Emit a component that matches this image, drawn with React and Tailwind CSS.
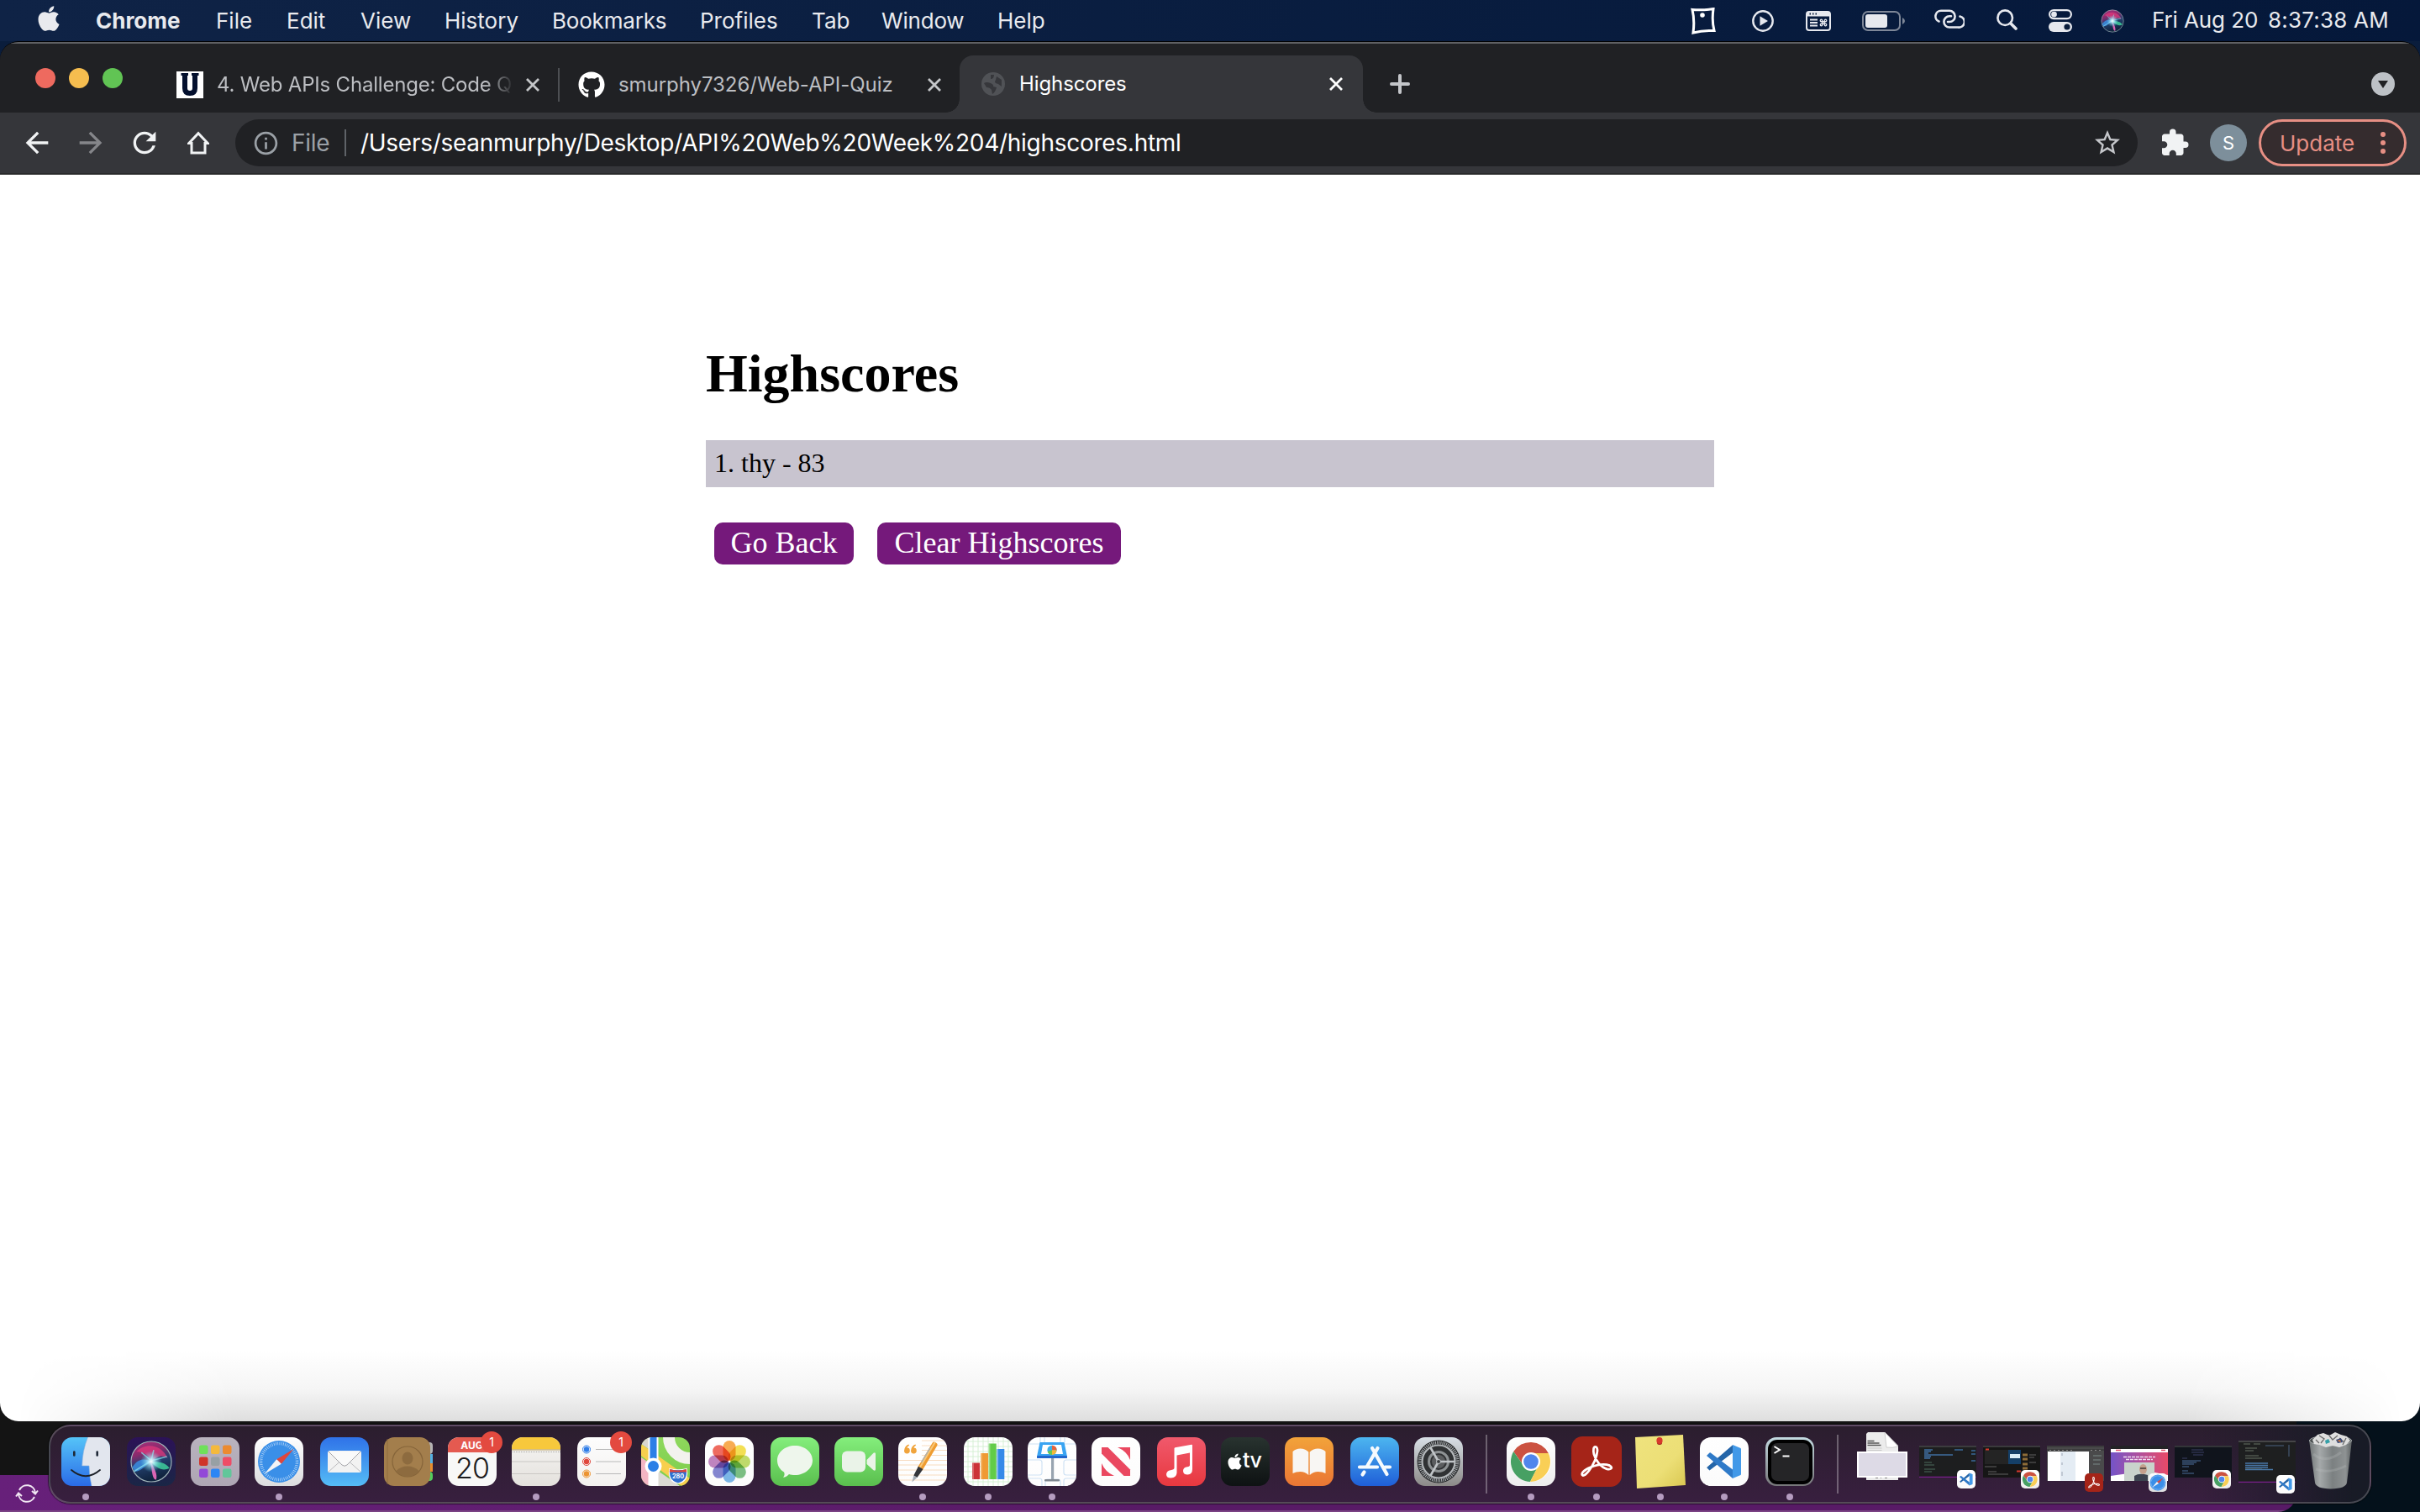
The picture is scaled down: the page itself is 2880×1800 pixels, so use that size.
import React from "react";
import { FaApple, FaGithub } from "react-icons/fa";
import { MdArrowBack, MdArrowForward, MdRefresh, MdInfoOutline, MdStarBorder, MdExtension } from "react-icons/md";
import { Command } from "lucide-react";

/* ---------- Menu bar ---------- */

const MENUS = [
  ["Chrome", "w-[143px] font-bold"],
  ["File", "w-[84px]"],
  ["Edit", "w-[88px]"],
  ["View", "w-[100px]"],
  ["History", "w-[128px]"],
  ["Bookmarks", "w-[176px] tracking-[-0.2px]"],
  ["Profiles", "w-[133px]"],
  ["Tab", "w-[83px]"],
  ["Window", "w-[138px] tracking-[-0.2px]"],
  ["Help", "w-[60px]"],
];

function SiriOrb({ size, className }) {
  return (
    <svg width={size} height={size} viewBox="0 0 52 52" className={className}>
      <defs>
        <linearGradient id="orb" x1="0" y1="0" x2="0.3" y2="1">
          <stop offset="0" stopColor="#a8327e" />
          <stop offset="0.35" stopColor="#8a2a6c" />
          <stop offset="0.6" stopColor="#24406f" />
          <stop offset="1" stopColor="#10243f" />
        </linearGradient>
        <radialGradient id="orbGlow">
          <stop offset="0" stopColor="#fff" />
          <stop offset="0.3" stopColor="#bff4ff" stopOpacity="0.8" />
          <stop offset="1" stopColor="#5fd0e8" stopOpacity="0" />
        </radialGradient>
      </defs>
      <circle cx="26" cy="26" r="24.5" fill="url(#orb)" stroke="#9fb3b8" strokeWidth="1.2" />
      <path d="M8 14 C18 3 38 4 46 22 C38 17 32 20 27 26 C22 16 14 14 8 14Z" fill="#e0387c" opacity="0.75" />
      <path d="M3 33 C10 22 18 22 26 26 C20 30 14 38 6 38Z" fill="#3c8de0" opacity="0.85" />
      <path d="M26 26 C34 26 44 27 48 34 C40 38 32 34 26 26Z" fill="#3ecf9c" opacity="0.85" />
      <path d="M25 26 C30 34 34 42 32 48 C27 48 27 36 25 26Z" fill="#f06cc0" opacity="0.9" />
      <path d="M5 38 L26 25 L14 15 M26 25 L29 12 M26 25 L45 20" stroke="#8fe8f0" strokeWidth="1.6" fill="none" opacity="0.7" />
      <circle cx="26" cy="26" r="13" fill="url(#orbGlow)" />
    </svg>
  );
}

function MenuBar() {
  return (
    <div className="flex h-[49px] items-center bg-linear-to-r from-[#0f2346] to-[#05183a] pl-[43px] font-[Inter,sans-serif] text-[26px] leading-[49px] text-[#e9eaee]">
      <FaApple className="mr-[39px] -mt-[5px] -ml-[2px] h-[34px] w-[34px] shrink-0" />
      {MENUS.map(([label, cls]) => (
        <div key={label} className={"shrink-0 whitespace-nowrap " + cls}>
          {label}
        </div>
      ))}
      <div className="ml-[765px] flex h-full shrink-0 items-center">
        <svg width="30" height="32" viewBox="0 0 30 32" fill="none" stroke="#fff" strokeWidth="3" className="mr-[43px]">
          <path d="M2 2.5 Q15 3.5 27 1.5 Q25 16 28 27.500 Q15 27 3 30 Q5 15 2 2.500Z" />
          <circle cx="14" cy="9" r="1.8" fill="#fff" stroke="#fff" strokeWidth="2" />
        </svg>
        <svg width="26" height="26" viewBox="0 0 26 26" className="mr-[38px]">
          <circle cx="13" cy="13" r="11.7" fill="none" stroke="#e6e8ee" strokeWidth="2.4" />
          <path d="M9.500 7.200 L19 13 L9.500 18.800Z" fill="#e6e8ee" />
        </svg>
        <div className="relative mr-[37px] flex h-6 w-[30px] rounded-[4px] border-2 border-[#e6e8ee]">
          <svg width="26" height="20" viewBox="0 0 26 20">
            <rect width="26" height="4.500" fill="#e6e8ee" />
            <path d="M2.500 1.500H4M6 1.500h1.500M9.500 1.500H11" stroke="#0a1d3c" strokeWidth="1.800" />
            <path d="M3 8.500h9M3 12h9M3 15.500h9" stroke="#e6e8ee" strokeWidth="2" />
          </svg>
          <Command className="absolute right-[2px] bottom-[3px] h-[10px] w-[10px] text-[#e6e8ee]" strokeWidth={3.2} />
        </div>
        <svg width="51" height="24" viewBox="0 0 51 24" className="mr-[35px]">
          <rect x="1" y="1" width="44" height="22" rx="6" fill="none" stroke="#7e8798" strokeWidth="2" />
          <rect x="4" y="4" width="26" height="16" rx="3" fill="#e6e8ee" />
          <path d="M48 8 Q51 9.500 51 12 Q51 14.500 48 16Z" fill="#7e8798" />
        </svg>
        <svg width="36" height="24" viewBox="0 0 36 24" fill="none" stroke="#e6e8ee" strokeWidth="2.600" strokeLinecap="round" className="-mt-[3px] mr-[38px]">
          <path d="M5.500 14.500 A6.600 6.600 0 0 1 8 1.800 H18 A6.600 6.600 0 0 1 18 15 H16" />
          <path d="M30.500 8.500 A6.600 6.600 0 0 1 28 21.500 H18 A6.600 6.600 0 0 1 18 8.300 H20" />
        </svg>
        <svg width="25" height="25" viewBox="0 0 25 25" fill="none" stroke="#e6e8ee" strokeLinecap="round" className="-mt-[2px] mr-[37px]">
          <circle cx="10.200" cy="10.200" r="8.800" strokeWidth="2.600" />
          <path d="M17 17 L23 23" strokeWidth="3.600" />
        </svg>
        <svg width="28" height="27" viewBox="0 0 28 27" className="mr-[34px]">
          <rect x="1.100" y="1.100" width="25.800" height="10" rx="5" fill="none" stroke="#e6e8ee" strokeWidth="2.200" />
          <circle cx="6.500" cy="6.100" r="3.400" fill="#e6e8ee" />
          <rect x="0" y="15" width="28" height="12" rx="6" fill="#e6e8ee" />
          <circle cx="22" cy="21" r="3.600" fill="#0a1d3c" />
        </svg>
        <SiriOrb size={28} className="mr-[33px]" />
        <div className="-mt-[2px] flex whitespace-nowrap">
          <div className="w-[138px] tracking-[-0.1px]">Fri Aug 20</div>
          <div className="w-[150px] tracking-[0.2px]">8:37:38 AM</div>
        </div>
      </div>
    </div>
  );
}

/* ---------- Browser chrome ---------- */

function Cross({ className }) {
  return (
    <svg width="16" height="16" viewBox="0 0 16 16" className={className} stroke="currentColor" strokeWidth="2.800">
      <path d="M1 1 L15 15 M15 1 L1 15" />
    </svg>
  );
}

function TabStrip() {
  return (
    <div className="flex h-[82px] items-start bg-[#202124] pl-[42px] font-[Inter,sans-serif] text-[24px] text-[#bcbec2]">
      <div className="mt-[29px] flex gap-4">
        <div className="h-6 w-6 rounded-full bg-[#ee6a5f]" />
        <div className="h-6 w-6 rounded-full bg-[#f5bd4f]" />
        <div className="h-6 w-6 rounded-full bg-[#61c454]" />
      </div>
      <div className="mt-4 flex h-[66px] w-[1000px] items-center">
        <div className="ml-[64px] flex h-8 w-8 shrink-0 items-center justify-center bg-white">
          <svg width="26" height="30" viewBox="0 0 26 30" fill="none">
            <path d="M7 1.500 V19 Q7 25 13 25 Q19 25 19 19 V1.500" stroke="#04102e" strokeWidth="6" />
            <path d="M2.500 2.500h8.500M15 2.500h8.500" stroke="#04102e" strokeWidth="3" />
          </svg>
        </div>
        <div className="ml-4 w-[352px] shrink-0 tracking-[-0.2px] whitespace-nowrap [mask-image:linear-gradient(to_right,black_320px,transparent_354px)]">
          4. Web APIs Challenge: Code Q
        </div>
        <Cross className="ml-4 shrink-0 text-[#c4c6c9]" />
        <div className="ml-[22px] h-10 w-[2px] shrink-0 bg-[#4d4f53]" />
        <FaGithub className="ml-[22px] h-8 w-8 shrink-0 text-white" />
        <div className="ml-4 w-[352px] shrink-0 tracking-[-0.05px] whitespace-nowrap">smurphy7326/Web-API-Quiz</div>
        <Cross className="ml-4 shrink-0 text-[#c4c6c9]" />
      </div>
      <div className="mt-[14px] -ml-5 flex h-[68px] items-stretch">
        <div className="h-4 w-4 self-end bg-[radial-gradient(circle_at_0_0,#202124_15.500px,#35363a_16px)]" />
        <div className="flex w-[480px] items-center rounded-t-2xl bg-[#35363a] pr-6 pl-[26px] text-white">
          <svg width="28" height="28" viewBox="0 0 28 28">
            <circle cx="14" cy="14" r="14" fill="#505256" />
            <path d="M3 13 Q6 11 11 13 Q15 15 14 17 L18 18 Q17 23 13 26 L12 21 Q10 18 6 18Z M11 3 L15 3 Q15 8 11 8Z M18 5 L24 9 L24 17 L20 14 Q14 13 17 9Z" fill="#36373b" />
          </svg>
          <div className="ml-[17px] grow tracking-[-0.1px]">Highscores</div>
          <Cross />
        </div>
        <div className="h-4 w-4 self-end bg-[radial-gradient(circle_at_100%_0,#202124_15.500px,#35363a_16px)]" />
      </div>
      <svg width="24" height="24" viewBox="0 0 24 24" stroke="#c4c6ca" strokeWidth="4" strokeLinecap="round" className="mt-9 ml-4">
        <path d="M12 2v20M2 12h20" />
      </svg>
      <svg width="28" height="28" viewBox="0 0 28 28" className="mt-[34px] mr-[30px] ml-auto">
        <circle cx="14" cy="14" r="14" fill="#bdc1c6" />
        <path d="M8 10 H20 L14 19Z" fill="#202124" />
      </svg>
    </div>
  );
}

function Toolbar() {
  return (
    <div className="flex h-[74px] items-center border-b-2 border-[#292a2b] bg-[#35363a] pl-6 font-[Inter,sans-serif] text-[28px]">
      <MdArrowBack className="h-10 w-10 text-[#f1f3f4]" />
      <MdArrowForward className="ml-6 h-10 w-10 text-[#85868a]" />
      <MdRefresh className="ml-6 h-10 w-10 text-[#f1f3f4]" />
      <svg width="26" height="28" viewBox="0 0 26 28" fill="none" stroke="#f1f3f4" strokeWidth="3" className="ml-[31px]">
        <path d="M5 26 V14.500 H1.800 L13 2.600 L24.200 14.500 H21 V26 Z" />
      </svg>
      <div className="ml-[31px] flex h-14 w-[2264px] items-center rounded-full bg-[#202124] pl-5 text-white">
        <MdInfoOutline className="h-[33px] w-[33px] text-[#9aa0a6]" />
        <div className="ml-[14px] w-[63px] tracking-[-0.3px] whitespace-nowrap text-[#9aa0a6]">File</div>
        <div className="h-8 w-[2px] bg-[#5f6368]" />
        <div className="ml-[17px] grow tracking-[-0.28px] whitespace-nowrap">
          /Users/seanmurphy/Desktop/API%20Web%20Week%204/highscores.html
        </div>
        <MdStarBorder className="mr-[18px] h-9 w-9 text-[#c4c6ca]" />
      </div>
      <MdExtension className="ml-[26px] h-9 w-9 text-[#f1f3f4]" />
      <div className="ml-6 flex h-11 w-11 items-center justify-center rounded-full bg-[#7d8f9b] text-[22px] text-white">S</div>
      <div className="ml-[14px] flex h-14 w-[176px] items-center rounded-full border-[3px] border-[#e78f84] bg-[#352c2e] pl-[22px] text-[26px] text-[#e78f84]">
        Update
        <div className="mr-[22px] ml-auto flex flex-col gap-1">
          <div className="h-1.5 w-1.5 rounded-full bg-[#e78f84]" />
          <div className="h-1.5 w-1.5 rounded-full bg-[#e78f84]" />
          <div className="h-1.5 w-1.5 rounded-full bg-[#e78f84]" />
        </div>
      </div>
    </div>
  );
}

function Page() {
  return (
    <div className="relative grow bg-white pt-[200px] font-['Liberation_Serif',serif] text-black">
      <div className="mx-auto w-[1200px]">
        <h1 className="text-[64px] leading-[74px] font-bold">Highscores</h1>
        <div className="mt-[42px] h-14 bg-[#c8c4cf] pl-[10px] text-[32px] leading-[54px]">1. thy - 83</div>
        <div className="mt-[42px] ml-[10px] flex gap-7 text-[36px] leading-[46px] text-white">
          <button className="h-[50px] w-[166px] rounded-[10px] bg-[#75197b] pb-[2px]">Go Back</button>
          <button className="h-[50px] w-[290px] rounded-[10px] bg-[#75197b] pb-[2px] whitespace-nowrap">Clear Highscores</button>
        </div>
      </div>
      <div className="absolute inset-x-0 bottom-0 h-[84px] bg-linear-to-b from-white via-[#f5f5f5] via-55% to-[#dedede] [mask-image:linear-gradient(to_right,transparent_20px,black_280px,black_2600px,transparent_2860px)]" />
    </div>
  );
}

/* ---------- Dock icons, drawn on a 58 unit square ---------- */

function Tile({ id, from, to, children, size = 58 }) {
  return (
    <svg width={size} height={size} viewBox="0 0 58 58" className="block">
      <defs>
        <linearGradient id={id} x1="0" y1="0" x2="0" y2="1">
          <stop offset="0" stopColor={from} />
          <stop offset="1" stopColor={to} />
        </linearGradient>
        <clipPath id={id + "-clip"}>
          <rect width="58" height="58" rx="13" />
        </clipPath>
      </defs>
      <g clipPath={"url(#" + id + "-clip)"}>
        <rect width="58" height="58" fill={"url(#" + id + ")"} />
        {children}
      </g>
    </svg>
  );
}

const Finder = () => (
  <Tile id="finder" from="#55c4f8" to="#2a6be8">
    <path d="M31.500 0 Q25 16 24.700 34 H33 Q33 46 36 58 H58 V0Z" fill="#e2e6ee" />
    <path d="M31.500 0 Q25 16 24.700 34 H33 Q33 46 36 58" fill="none" stroke="#8fb4dc" strokeWidth="0.600" />
    <path d="M15.300 17.500v4M42.700 17.500v4" stroke="#1f2937" strokeWidth="2.600" strokeLinecap="round" />
    <path d="M12 39 Q29 53.500 46 39" fill="none" stroke="#1c2028" strokeWidth="1.900" strokeLinecap="round" />
  </Tile>
);

const Siri = () => (
  <Tile id="siri" from="#2c1257" to="#1a2646">
    <g transform="translate(3.500 3.500)">
      <SiriOrb size={51} />
    </g>
  </Tile>
);

const PAD = ["#6fe05a", "#f5b93c", "#ec8a30", "#d0342a", "#98a0a4", "#ee4c66", "#9248d8", "#2d86f4", "#62c69a"];
const Launchpad = () => (
  <Tile id="pad" from="#b9b3be" to="#aea6b4">
    {PAD.map((c, i) => (
      <rect key={c} x={10 + (i % 3) * 14} y={9.5 + Math.floor(i / 3) * 14} width="10.500" height="10.500" rx="2.300" fill={c} />
    ))}
  </Tile>
);

const Safari = ({ size = 58, id = "safari" }) => (
  <Tile id={id} from="#ffffff" to="#dcdcde" size={size}>
    <circle cx="29" cy="29" r="25" fill="#3a8fe8" />
    <circle cx="29" cy="29" r="21.500" fill="none" stroke="#e4f0fc" strokeWidth="3.600" strokeDasharray="0.700 1.550" opacity="0.800" />
    <path d="M46.500 14 L31.800 31.800 L26.200 26.200Z" fill="#e0463c" />
    <path d="M11.500 44 L26.200 26.200 L31.800 31.800Z" fill="#f4f4f6" />
  </Tile>
);

const Mail = () => (
  <Tile id="mail" from="#2f72e8" to="#55bcf6">
    <rect x="9" y="16" width="40" height="26" rx="2.500" fill="#f2f2f2" />
    <path d="M9.500 41.500 L24 28.500 M48.500 41.500 L34 28.500" stroke="#b4b4b8" strokeWidth="0.900" />
    <path d="M10 17 L26 33 Q29 35.500 32 33 L48 17" fill="#fafafa" stroke="#a4a4a8" strokeWidth="1" />
  </Tile>
);

const Contacts = () => (
  <svg width="58" height="58" viewBox="0 0 58 58">
    <rect x="40" y="6" width="18" height="14" rx="4" fill="#b5b3b4" />
    <rect x="40" y="20" width="18" height="11" fill="#55b0e4" />
    <rect x="40" y="31" width="18" height="10" fill="#e88c2e" />
    <rect x="40" y="41" width="18" height="11" rx="4" fill="#54cc5c" />
    <rect width="55" height="58" rx="12" fill="#a37e4c" />
    <path d="M4 2v54" stroke="#8c6a3c" strokeWidth="0.800" />
    <circle cx="28" cy="29" r="18" fill="none" stroke="#86653a" strokeWidth="1.200" />
    <ellipse cx="28" cy="25" rx="6.500" ry="7.500" fill="#8d6b3f" />
    <path d="M14.500 40 Q20 34.500 28 34.500 Q36 34.500 41.500 40 Q36 47 28 47 Q20 47 14.500 40Z" fill="#8d6b3f" />
  </svg>
);

const Badge = () => (
  <div className="absolute -top-[7px] -right-[7px] flex h-[26px] w-[26px] items-center justify-center rounded-full bg-[#e34a3f] font-[Inter,sans-serif] text-[14px] leading-none text-white">1</div>
);

const Calendar = () => (
  <div className="relative">
    <div className="flex h-[58px] w-[58px] flex-col overflow-hidden rounded-[13px] bg-[#f8f8f7] font-[Inter,sans-serif]">
      <div className="h-[18px] bg-[#e45a50] pr-[1px] text-center text-[12px] leading-[20px] font-bold text-white">AUG</div>
      <div className="text-center text-[34px] leading-[37px] font-light tracking-[-1px] text-[#1c1c1e]">20</div>
    </div>
    <Badge />
  </div>
);

const Notes = () => (
  <Tile id="notes" from="#f6f5f3" to="#e4e1dd">
    <rect width="58" height="14.500" fill="#f7c83c" />
    <path d="M0 15h58" stroke="#b9a36a" strokeWidth="1" />
    <path d="M1 17.500h57" stroke="#a9a7a4" strokeWidth="1" strokeDasharray="1 1" />
    <path d="M0 29h58M0 43.500h58" stroke="#c9c7c4" strokeWidth="1" />
  </Tile>
);

const Reminders = () => (
  <div className="relative">
    <Tile id="rem" from="#fdfdfd" to="#f3f1ef">
      {["#2f7de8", "#e0473c", "#ec9433"].map((c, i) => (
        <g key={c}>
          <circle cx="11" cy={14.5 + i * 14.5} r="4.500" fill="none" stroke={c} strokeWidth="1" />
          <circle cx="11" cy={14.5 + i * 14.5} r="3.200" fill={c} />
          <path d={"M22 " + (14.5 + i * 14.5) + "h30"} stroke="#b8b8b8" strokeWidth="1" />
        </g>
      ))}
    </Tile>
    <Badge />
  </div>
);

const Maps = () => (
  <Tile id="maps" from="#8ed85c" to="#7ccc4c">
    <path d="M0 24 L9 30 V58 H0Z" fill="#f4b6c4" />
    <path d="M0 0 H9 V14 L0 8Z" fill="#d9d5ce" />
    <path d="M20 40 L46 58 H20Z" fill="#dcdad4" />
    <path d="M0 8 L58 49 V58 H48 L0 22Z" fill="#f7cf4e" />
    <circle cx="58" cy="0" r="25" fill="none" stroke="#f3f2ee" strokeWidth="14" />
    <path d="M8.500 0V58H20.500V0Z" fill="#fff" />
    <path d="M10.500 0V34H18.500V0Z" fill="#2c7fe6" />
    <circle cx="14.500" cy="34.500" r="10" fill="#fff" />
    <circle cx="14.500" cy="34.500" r="6.500" fill="#2c7fe6" />
    <path d="M34 37.500 Q44 40 54 37.500 Q57 52 44 55 Q31 52 34 37.500Z" fill="#2f6fd0" stroke="#fff" strokeWidth="1.200" />
    <path d="M34.300 38 Q44 41 53.700 38 L54.400 41.500 H33.600Z" fill="#e0453c" />
    <text x="44" y="49.300" fontSize="7.200" fontWeight="700" fontFamily="Inter, sans-serif" fill="#fff" textAnchor="middle">280</text>
  </Tile>
);

const PETALS = ["#f79a2c", "#f2d92e", "#b4d44a", "#5fb46a", "#5fa8e4", "#6a6cc8", "#b46ab4", "#ec4a3c"];
const Photos = () => (
  <Tile id="photos" from="#ffffff" to="#fbfbfb">
    {PETALS.map((c, i) => (
      <rect key={c} x="21.500" y="4" width="15" height="24" rx="7.500" fill={c} opacity="0.820" transform={"rotate(" + i * 45 + " 29 29)"} className="mix-blend-multiply" />
    ))}
    <circle cx="29" cy="29" r="1.300" fill="#fff" />
  </Tile>
);

const Messages = () => (
  <Tile id="msg" from="#84ee7c" to="#5abf4e">
    <path d="M29 10 C41 10 50 18 50 27.500 C50 37 41 45 29 45 C26.500 45 24 44.600 22 44 C20 46.500 17.500 47.600 15 47.800 C16.800 46 17 43.500 16 41.500 C11 38.500 8 33.500 8 27.500 C8 18 17 10 29 10Z" fill="#eef6ec" />
  </Tile>
);

const FaceTime = () => (
  <Tile id="ft" from="#84ee7c" to="#5abf4e">
    <rect x="9" y="16.500" width="28" height="25" rx="6" fill="#eaf3e8" />
    <path d="M38.500 27 L46.500 18.800 Q49 17.500 49 20 V38 Q49 40.500 46.500 39.200 L38.500 32Z" fill="#eaf3e8" />
  </Tile>
);

const Pages = () => (
  <Tile id="pages" from="#ffffff" to="#fdfdfd">
    <path d="M28 4h30M28 10h30M28 15.500h30M28 21.500h30M0 27.500h58M0 33h58M0 39h58M0 45h58M0 51h58" stroke="#f8dcc0" strokeWidth="1" />
    <path d="M12.500 8.500 Q7.500 10 7 16 A3.400 3.400 0 1 0 10.400 12.600 Q11 10.500 13 9.700Z M20.500 8.500 Q15.500 10 15 16 A3.400 3.400 0 1 0 18.400 12.600 Q19 10.500 21 9.700Z" fill="#f0a43c" />
    <g transform="translate(16.500 52.500) rotate(31)">
      <rect x="-2.900" y="-54" width="6.600" height="38" rx="2.600" fill="#ef9c30" />
      <rect x="-1.600" y="-54" width="2" height="38" fill="#f9c878" />
      <rect x="-2.800" y="-45" width="1.300" height="20" fill="#a8b4c0" />
      <path d="M-2.900 -19 H3.700 L2.800 -7 H-2Z" fill="#34363a" />
      <path d="M-2 -7 H2.800 L0.400 1Z" fill="#a4acb4" />
    </g>
  </Tile>
);

const Numbers = () => (
  <Tile id="numbers" from="#ffffff" to="#fdfdfd">
    <path d="M0 5h58M0 11h58M0 17h58M0 23h58M0 29h58M0 35h58M0 41h58M0 47h58M0 53h58M5 0v58M11 0v58M17 0v58M23 0v58M29 0v58M35 0v58M41 0v58M47 0v58M53 0v58" stroke="#d3eed0" strokeWidth="0.900" />
    <rect x="10" y="30.500" width="9" height="19.500" fill="#cc3238" />
    <rect x="20" y="19" width="9" height="31" fill="#ef9a34" />
    <rect x="29.700" y="7.500" width="9" height="42.500" fill="#62cc48" />
    <rect x="39.300" y="14" width="9" height="36" fill="#358ae8" />
    <path d="M11 30.500V50M21 19V50M30.700 7.500V50M40.300 14V50" stroke="#fff" strokeOpacity="0.350" strokeWidth="1.500" />
  </Tile>
);

const Keynote = () => (
  <Tile id="keynote" from="#ffffff" to="#fdfdfd">
    <path d="M0 8h58M0 27h14q3 0 3 3v12q0 3-3 3H0M0 49h14q3 0 3 3v6M58 27H46q-3 0-3 3v12q0 3 3 3h12M58 49H46q-3 0-3 3v6M15 0v6M20 0v6M39 0v6M44 0v6M21 58v-5q0-3 3-3h12q3 0 3 3v5" stroke="#cfe2f4" strokeWidth="1.200" fill="none" />
    <path d="M28 24h3.200v27H28Z" fill="#98a4b0" />
    <rect x="20" y="50" width="18" height="2.500" rx="1" fill="#7f8790" />
    <path d="M14.500 6 H43.500 L47 23 H11Z" fill="#3aa4f2" />
    <path d="M11.200 22 H46.800 L47 25 H11Z" fill="#2267cc" />
    <path d="M18 9 H40 L42 20 H16Z" fill="#fff" />
    <circle cx="29" cy="15.300" r="5.600" fill="#3fb0e8" />
    <path d="M29 15.300 V9.700 A5.600 5.600 0 0 1 34.600 15.300Z" fill="#e8623c" />
    <path d="M29 15.300 H34.600 A5.600 5.600 0 0 1 29 20.900Z" fill="#f3b93a" />
    <path d="M29 15.300 V20.900 A5.600 5.600 0 0 1 23.600 17Z" fill="#6cc850" />
  </Tile>
);

const News = () => (
  <Tile id="news" from="#ffffff" to="#fcfcfc">
    <path d="M12 12 H19.500 L46 38.500 V46 H38.500 L12 19.500Z" fill="#ea4860" />
    <path d="M31 12 H46 V27 Q42.500 17 31 12Z" fill="#ea4860" />
    <path d="M12 31 Q16.500 41.500 27 46 H12Z" fill="#ea4860" />
  </Tile>
);

const Music = () => (
  <Tile id="music" from="#f0596c" to="#e8383f">
    <path d="M20.500 13.500 Q20.500 12.500 21.500 12.200 L41 8.800 Q42 8.600 42 9.800 V38 Q42 44 36.500 44.500 Q31 44.500 31 40 Q31 36 36 35.300 Q39 35 39 33 V18.500 L23.500 21.500 V42.500 Q23 48 16.500 48.500 Q11 48.500 11 44 Q11.500 40 16 39.200 Q20.500 38.500 20.500 36.500Z" fill="#fff" />
  </Tile>
);

const AppleTV = () => (
  <div className="flex h-[58px] w-[58px] items-center rounded-[13px] bg-linear-to-b from-[#28332f] to-[#0e1213] pl-[7px] font-[Inter,sans-serif] text-[25px] leading-none font-medium text-white">
    <FaApple className="-mt-[1px] h-[22px] w-[19px] shrink-0" />
    <span className="-mt-[3px] tracking-[-0.5px]">tv</span>
  </div>
);

const Books = () => (
  <Tile id="books" from="#f2a33a" to="#ea7634">
    <path d="M28.300 17.500 Q24 13.500 18.500 13.500 Q13 13.500 9.500 17 V43 Q13 41 18.500 41 Q24 41 28.300 45Z" fill="#f8f6f3" />
    <path d="M29.700 17.500 Q34 13.500 39.500 13.500 Q45 13.500 48.500 17 V43 Q45 41 39.500 41 Q34 41 29.700 45Z" fill="#f8f6f3" />
  </Tile>
);

const AppStore = () => (
  <Tile id="store" from="#4cb6f0" to="#1f5fd8">
    <g stroke="#f6fafd" strokeWidth="4.200" strokeLinecap="round" fill="none">
      <path d="M32.500 13 L20 34.500M26 13 L43.500 44M11 35.500 H32M41.500 35.500 H47M16.500 41.500 L14.500 44.500" />
    </g>
  </Tile>
);

const Settings = () => (
  <Tile id="settings" from="#d8dfe6" to="#8c8a88">
    <circle cx="29" cy="29" r="25.500" fill="#26282a" />
    <circle cx="29" cy="29" r="22.500" fill="none" stroke="#a9adb0" strokeWidth="4" strokeDasharray="1.100 1.100" />
    <circle cx="29" cy="29" r="19.500" fill="#303234" stroke="#b4b8bb" strokeWidth="2.200" />
    <circle cx="29" cy="29" r="11.500" fill="none" stroke="#8e9294" strokeWidth="3" />
    <circle cx="29" cy="29" r="8" fill="#5b5d5f" />
    <path d="M29 29 H48M29 29 L19.500 12.500M29 29 L19.500 45.500" stroke="#c0c4c7" strokeWidth="2.600" />
    <circle cx="29" cy="29" r="2.500" fill="#3a3c3e" stroke="#c0c4c7" />
  </Tile>
);

const Chrome = ({ size = 58, id = "chrome" }) => (
  <Tile id={id} from="#ffffff" to="#ededed" size={size}>
    <circle cx="29" cy="29" r="24" fill="#fff" />
    <path d="M29 19 H49.800 A24 24 0 0 0 8.200 17 L20.300 34 A10 10 0 0 1 29 19Z" fill="#cb5241" />
    <path d="M8.200 17 A24 24 0 0 0 28 53 L37.700 34 A10 10 0 0 1 20.300 34Z" fill="#47a063" />
    <path d="M49.800 19 A24 24 0 0 1 28 53 L37.700 34 A10 10 0 0 0 29 19Z" fill="#f9cf56" />
    <circle cx="29" cy="29" r="11" fill="#fff" />
    <circle cx="29" cy="29" r="8.800" fill="#5086ec" />
  </Tile>
);

const Acrobat = ({ size = 60, id = "acrobat" }) => (
  <Tile id={id} from="#a52418" to="#a52418" size={size}>
    <path d="M27.500 12 C31.500 12 30 21 27 28 C23.500 36 17 45 13.500 45 C10 44 14 38.500 22 35.500 C30 32.500 39 31.500 44 33.500 C48.500 36 45.500 38.500 41 37.500 C34 35.500 28 28 26 20.500 C25 15.500 25.500 12 27.500 12Z" fill="none" stroke="#fff" strokeWidth="2.700" strokeLinejoin="round" />
  </Tile>
);

const Stickies = () => (
  <svg width="60" height="66" viewBox="0 0 60 66" className="-mt-[3px] -mb-[5px]">
    <defs>
      <linearGradient id="sticky" x1="0" y1="0" x2="1" y2="1">
        <stop offset="0" stopColor="#efe37e" />
        <stop offset="0.600" stopColor="#ecdf76" />
        <stop offset="1" stopColor="#d9c750" />
      </linearGradient>
    </defs>
    <path d="M0 3 L57 0 L60 60 L2 64Z" fill="url(#sticky)" />
    <ellipse cx="29" cy="9.500" rx="3" ry="2.500" fill="#9a1c16" />
    <ellipse cx="29" cy="7" rx="3.600" ry="4" fill="#d8382c" />
  </svg>
);

const VSCode = ({ size = 58, id = "vscode" }) => (
  <Tile id={id} from="#ffffff" to="#fbfbfb" size={size}>
    <path d="M8 36 L11.500 39.500 L39 18.500 V9.200 L8.200 36Z" fill="#2465a8" />
    <path d="M8 22 L11.500 18.500 Q12 18 12.800 18.500 L39 38.500 V49Z" fill="#2f7ac8" />
    <path d="M39 9 L48.500 13 Q49 13.500 49 14.500 V43.500 Q49 44.500 48.500 45 L39 49Z" fill="#4299e8" />
  </Tile>
);

const Terminal = () => (
  <div className="flex h-[58px] w-[58px] rounded-[13px] bg-linear-to-b from-[#c4dbe2] to-[#77777a] p-[2.5px]">
    <div className="flex grow rounded-[11px] bg-black p-1">
      <div className="grow rounded-[7px] bg-[#252527]">
        <svg width="30" height="20" viewBox="0 0 30 20" fill="none" stroke="#fff" strokeWidth="2">
          <path d="M3.500 4 L10 8 L3.500 12M13.500 15.500h8" />
        </svg>
      </div>
    </div>
  </div>
);

const DocStack = () => (
  <svg width="60" height="60" viewBox="0 0 60 60" className="-mt-[6px]">
    <path d="M11 2 L13 0 H33 L49 16 V57 H11Z" fill="#ececec" />
    <path d="M33 0 L49 17 Q42 19 35 18Z" fill="#fff" stroke="#c4c4c4" strokeWidth="0.800" />
    <path d="M12.500 10.500h8M12.500 13h14M12.500 15.500h16" stroke="#555" strokeWidth="1.400" />
    <path d="M12.500 19h17M12.500 21.500h17M12.500 24h17" stroke="#c0c0c0" strokeWidth="0.800" />
    <rect x="1" y="24" width="58" height="29" fill="#dddae6" stroke="#fff" strokeWidth="2" />
    <path d="M22 54.500h3M28 54.500h1M33 54.500h3" stroke="#888" strokeWidth="1" />
  </svg>
);

const Trash = () => (
  <svg width="52" height="68" viewBox="0 0 52 68" className="-mt-[6px] -mb-[4px]">
    <defs>
      <linearGradient id="bin" x1="0" y1="0" x2="1" y2="0">
        <stop offset="0" stopColor="#6f7475" />
        <stop offset="0.250" stopColor="#a5a9aa" />
        <stop offset="0.550" stopColor="#7b8081" />
        <stop offset="0.850" stopColor="#8e9293" />
        <stop offset="1" stopColor="#5a5f60" />
      </linearGradient>
    </defs>
    <path d="M0 9 Q26 20 51 9 L45 60 Q44 67 26 67.500 Q8 67 7 60Z" fill="url(#bin)" />
    <ellipse cx="25.500" cy="10" rx="25" ry="6" fill="#4b5051" stroke="#a7abac" />
    <path d="M4 9 L10 3 L17 1 L24 4 L31 0 L38 3 L45 5 L49 10 L44 15 L36 18 L28 16 L20 18 L12 15 L6 14Z" fill="#dedede" />
    <path d="M12 4 L18 8 L14 13 M24 4 L28 9 L34 4 M36 7 L42 12 M8 9 L12 13 M44 7 L40 15" stroke="#6b6b6b" strokeWidth="1.300" fill="none" />
    <path d="M19 10 L23 8 L25 12 L20 14Z" fill="#35a0a8" />
    <path d="M32 9 L38 7 L40 12 L34 13Z" fill="#3a4a78" />
    <path d="M33 10 L37 9 L38 12Z" fill="#d47b3a" />
    <path d="M5 26 Q20 38 38 24M8 44 Q24 50 44 40" stroke="#bfc3c4" strokeOpacity="0.250" strokeWidth="3" fill="none" />
  </svg>
);

/* ---------- Minimised windows ---------- */

function Mini({ h, className, badge, children }) {
  return (
    <div className={"relative " + className}>
      <svg width="68" height={h} viewBox={"0 0 68 " + h} className="block">
        {children}
      </svg>
      <div className="absolute right-[1px] -bottom-[13px]">{badge}</div>
    </div>
  );
}

const EditorA = () => (
  <Mini h={38} className="mb-[10px]" badge={<VSCode size={22} id="vs-a" />}>
    <rect width="68" height="38" fill="#1d1e1f" />
    <path d="M0 1h68" stroke="#3c3c3e" strokeWidth="2" />
    <path d="M6 5h10M6 7h8M6 9h5M6 11h34M6 13h8M6 15h7" stroke="#3f6da0" strokeWidth="1.500" />
    <path d="M6 20h9M6 23h12M6 28h13M6 31h9" stroke="#4d6a5c" strokeWidth="1" />
    <path d="M42 5h10M62 6h5M62 10h5M62 18h5" stroke="#3a6a9a" strokeWidth="1.300" />
    <path d="M0 37.500h68" stroke="#7a1f8a" strokeWidth="1.500" />
  </Mini>
);

const Video = () => (
  <Mini h={38} className="mb-[10px]" badge={<Chrome size={22} id="cr-a" />}>
    <rect width="68" height="38" fill="#161616" />
    <path d="M0 1h68" stroke="#3a3a3c" strokeWidth="2" />
    <rect x="2" y="5" width="28" height="17" fill="#242424" />
    <rect x="30" y="5" width="15" height="17" fill="#143f68" />
    <rect x="32" y="10" width="12" height="5" fill="#d8ecf8" />
    <path d="M3 4.500h4M40 30.500h5" stroke="#d8382c" strokeWidth="2" />
    <path d="M47 11h6M47 16h6M47 22h6M47 27h6" stroke="#8e6c38" strokeWidth="3" />
    <path d="M55 11h8M55 14h6M55 20h8M2 25h14M6 31h10M6 34h24" stroke="#606060" strokeWidth="1" />
  </Mini>
);

const PdfDoc = () => (
  <Mini h={42} className="mb-[6px]" badge={<Acrobat size={22} id="ac-a" />}>
    <rect width="68" height="42" fill="#4a4a4b" />
    <path d="M0 1h68M0 5h68" stroke="#39393a" strokeWidth="1.500" />
    <path d="M3 5.500h28M52 5.500h12" stroke="#8a8a8a" strokeWidth="1" strokeDasharray="2 3" />
    <rect x="1" y="7" width="49" height="35" fill="#fff" />
    <rect x="16" y="7" width="18" height="35" fill="#e4ecf4" />
    <path d="M18 9v3M18 20v3M18 31v5" stroke="#8a94a4" strokeWidth="0.800" />
    <path d="M55 12h10M55 17h9M55 22h8" stroke="#7a8a88" strokeWidth="1" />
  </Mini>
);

const Site = () => (
  <Mini h={42} className="mb-[6px]" badge={<Safari size={22} id="sf-a" />}>
    <defs>
      <linearGradient id="hero" x1="0" y1="0" x2="1" y2="0">
        <stop offset="0" stopColor="#7454c8" />
        <stop offset="0.500" stopColor="#b0509c" />
        <stop offset="1" stopColor="#e84a68" />
      </linearGradient>
    </defs>
    <rect width="68" height="42" fill="#fff" />
    <rect width="68" height="4" fill="#232326" />
    <path d="M6 5.500h6M60 5.500h5" stroke="#e0506c" strokeWidth="1.500" />
    <path d="M0 8H68V35 L42 30 L0 36Z" fill="url(#hero)" />
    <path d="M15 13.500h38M18 16.500h32" stroke="#f0dcf0" strokeWidth="1.300" strokeDasharray="4 1" />
    <rect x="16" y="20" width="36" height="22" fill="#c9d3cc" />
    <path d="M28 42 V36 Q34 32 44 35 V42Z" fill="#3c4450" />
    <ellipse cx="38.500" cy="28" rx="4.500" ry="6" fill="#c4a08c" />
    <path d="M35 27h7" stroke="#222" strokeWidth="1.200" />
  </Mini>
);

const DevTools = () => (
  <Mini h={38} className="mb-[10px]" badge={<Chrome size={22} id="cr-b" />}>
    <rect width="68" height="38" fill="#10141c" />
    <path d="M0 1h68" stroke="#333538" strokeWidth="2" />
    <path d="M20 5h14M20 8h15M22 11h12M9 15h6" stroke="#3a3f64" strokeWidth="1" />
    <path d="M9 18h22M9 20h17M9 22h14M9 25h8M9 30h7M9 33h14" stroke="#4a6c9a" strokeWidth="1.200" />
  </Mini>
);

const EditorB = () => (
  <Mini h={50} className="mb-[4px]" badge={<VSCode size={22} id="vs-b" />}>
    <rect width="68" height="50" fill="#1e1f20" />
    <path d="M0 1h68" stroke="#454547" strokeWidth="2" />
    <path d="M6 4h8M18 4h8M8 9h14M8 12h10M8 18h16M8 21h20M8 34h20" stroke="#6f7a6e" strokeWidth="0.900" />
    <path d="M8 27h27M8 29.500h27M8 32h27M8 34.500h33" stroke="#4a78a8" strokeWidth="1.500" />
    <path d="M60 5v14M32 6h22" stroke="#3c4c60" strokeWidth="1.500" />
    <path d="M0 49.500h68" stroke="#7a1f8a" strokeWidth="1.500" />
  </Mini>
);

const APPS = [
  [Finder, "", true],
  [Siri, "ml-5", false],
  [Launchpad, "ml-[18px]", false],
  [Safari, "ml-[18px]", true],
  [Mail, "ml-5", false],
  [Contacts, "ml-[18px]", false],
  [Calendar, "ml-[18px]", false],
  [Notes, "ml-[18px]", true],
  [Reminders, "ml-5", false],
  [Maps, "ml-[18px]", false],
  [Photos, "ml-[18px]", false],
  [Messages, "ml-5", false],
  [FaceTime, "ml-[18px]", false],
  [Pages, "ml-[18px]", true],
  [Numbers, "ml-5", true],
  [Keynote, "ml-[18px]", true],
  [News, "ml-[18px]", false],
  [Music, "ml-5", false],
  [AppleTV, "ml-[18px]", false],
  [Books, "ml-[18px]", false],
  [AppStore, "ml-5", false],
  [Settings, "ml-[18px]", false],
];

const PINNED = [
  [Chrome, "ml-[23px]", true],
  [Acrobat, "ml-[19px]", true],
  [Stickies, "ml-[16px]", true],
  [VSCode, "ml-[17px]", true],
  [Terminal, "ml-5", true],
];

function DockApp({ Icon, gap, running }) {
  return (
    <div className={"flex h-[78px] shrink-0 flex-col items-center " + gap}>
      <div className="flex h-[58px] items-center">
        <Icon />
      </div>
      {running && <div className="mt-[9px] h-2 w-2 rounded-full bg-[#b59cc0]" />}
    </div>
  );
}

function Dock() {
  return (
    <div className="relative ml-[58px] flex h-[94px] w-[2764px] items-start rounded-[26px] border-2 border-white/20 bg-[linear-gradient(to_right,transparent_2560px,#181b26_2740px),linear-gradient(to_bottom,#2b1e2e,#381f3f)] pt-[13px] pl-[13px] shadow-[0_0_1px_1px_rgba(0,0,0,0.5)]">
      {APPS.map(([Icon, gap, running], i) => (
        <DockApp key={i} Icon={Icon} gap={gap} running={running} />
      ))}
      <div className="-mt-[3px] ml-[27px] h-[70px] w-[2px] bg-white/30" />
      {PINNED.map(([Icon, gap, running], i) => (
        <DockApp key={i} Icon={Icon} gap={gap} running={running} />
      ))}
      <div className="-mt-[3px] ml-[27px] h-[70px] w-[2px] bg-white/30" />
      <div className="ml-[22px] flex h-[58px] items-end">
        <div className="self-start">
          <DocStack />
        </div>
        <div className="ml-[14px] flex items-end gap-2">
          <EditorA />
          <Video />
          <PdfDoc />
          <Site />
          <DevTools />
          <EditorB />
        </div>
        <div className="ml-4">
          <Trash />
        </div>
      </div>
    </div>
  );
}

export default function App() {
  return (
    <div className="flex h-[1800px] w-[2880px] flex-col overflow-hidden bg-[linear-gradient(to_bottom,#0a1d3c_900px,#04111b_1000px)]">
      <MenuBar />
      <div className="relative z-10 flex h-[1643px] flex-col overflow-hidden rounded-[22px] border-t border-black bg-[#202124]">
        <div className="h-[2px] shrink-0 bg-[#5f6063]" />
        <TabStrip />
        <Toolbar />
        <Page />
      </div>
      <div className="relative -mt-[40px] h-[148px]">
        <div className="absolute inset-y-0 left-0 flex w-[2733px] flex-col overflow-hidden rounded-br-[22px] bg-[#141414]">
          <div className="mt-[104px] flex h-11 items-start border-b-2 border-[#7a4284] bg-linear-to-r from-[#67207a] via-[#581a66] to-[#581a66]">
            <svg width="28" height="24" viewBox="0 0 28 24" fill="none" stroke="#f0e6f2" strokeWidth="2" className="mt-[10px] ml-[18px]">
              <path d="M5 8 A10 10 0 0 1 24 11 M20 9 L24 12.500 L27 8.500" />
              <path d="M23 16 A10 10 0 0 1 4 13 M1 15.500 L4 11.500 L8 15" />
            </svg>
          </div>
        </div>
        <div className="h-11" />
        <Dock />
      </div>
    </div>
  );
}
